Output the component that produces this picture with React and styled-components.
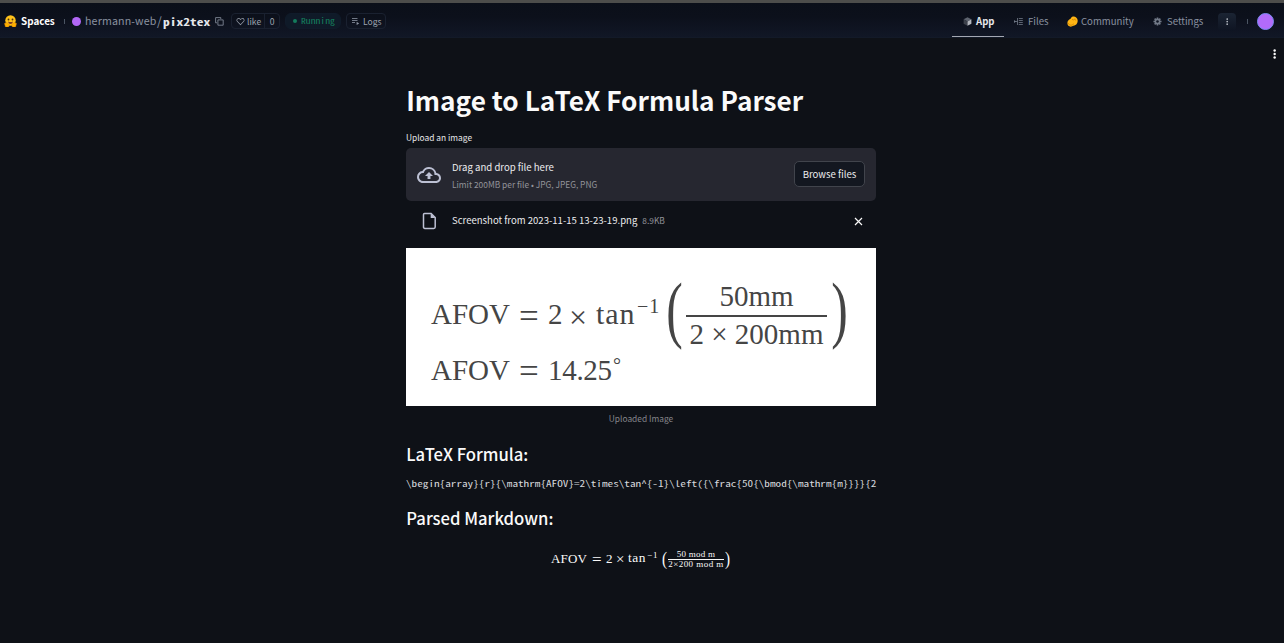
import React from 'react';
import styled, { createGlobalStyle, css } from 'styled-components';

const sans = css`font-family: "Noto Sans CJK JP", "Noto Sans", sans-serif;`;
const mono = css`font-family: "Noto Sans Mono CJK JP", "DejaVu Sans Mono", monospace;`;
const serif = css`font-family: "Liberation Serif", serif;`;

const Global = createGlobalStyle`
  * { box-sizing: border-box; }
  body { margin: 0; background: #0e1117; }
`;
const Page = styled.div`
  ${sans}
  height: 643px;
  overflow: hidden;
  background: #0e1117;
  color: #fafafa;
  white-space: nowrap;
  svg { display: block; flex: none; }
`;
const Header = styled.header`
  height: 38px;
  display: flex;
  justify-content: space-between;
  border-top: 3px solid #4d4d4b;
  border-bottom: 1px solid #131a28;
  padding: 0 10px 0 4px;
  background: linear-gradient(#0b0f19, #0c101b 40%, #111726);
`;
const Group = styled.div`
  display: flex;
  align-items: center;
  height: ${p => p.$h || 36}px;
`;
const Label = styled.span`
  display: block;
  width: ${p => p.$w}px;
  margin-left: ${p => p.$ml || 0}px;
  padding-top: ${p => p.$pt || 0}px;
  font-size: ${p => p.$size || 9.6}px;
  font-weight: ${p => (p.$bold ? 700 : 400)};
  letter-spacing: ${p => p.$ls || 0}px;
  color: ${p => p.$c || '#8b93a1'};
  line-height: 16px;
`;
const MonoLabel = styled(Label)`
  ${mono}
  transform: scaleX(1.273);
  transform-origin: 0 50%;
`;
const Divider = styled.i`
  width: 1px;
  height: 5px;
  margin: ${p => p.$t || 0}px ${p => p.$r}px 0 ${p => p.$l}px;
  background: #4b5563;
`;
const Dot = styled.i`
  flex: none;
  width: ${p => p.$d}px;
  height: ${p => p.$d}px;
  border-radius: 50%;
  background: ${p => p.$bg};
`;
const Avatar = styled(Dot)`
  margin-top: 2px;
  border: 1px solid #788cf0;
`;
const Pill = styled.div`
  display: flex;
  align-items: center;
  width: ${p => p.$w}px;
  height: 16px;
  margin-left: ${p => p.$ml}px;
  padding-left: ${p => p.$pl}px;
  border: 1px solid ${p => p.$bd || '#1a2130'};
  border-radius: ${p => p.$r || 4}px;
  background: ${p => p.$bg || 'transparent'};
`;
const Count = styled.span`
  width: 15px;
  height: 14px;
  margin-left: 1px;
  border-left: 1px solid #1a2130;
  font-size: 8.6px;
  line-height: 14px;
  text-align: center;
  color: #9ca3af;
`;
const Tab = styled.div`
  display: flex;
  align-items: center;
  width: ${p => p.$w}px;
  height: 34px;
  padding: 3px 0 0 ${p => p.$pl}px;
  border-bottom: 1px solid ${p => (p.$active ? '#a3a8b3' : 'transparent')};
`;
const More = styled.div`
  display: flex;
  align-items: center;
  justify-content: center;
  width: 18px;
  height: 18px;
  margin-top: 3px;
  border-radius: 4px;
  background: linear-gradient(#1b2433, #0e1422);
`;
const MenuRow = styled.div`
  display: flex;
  justify-content: flex-end;
  height: 41px;
  padding: 11px 8px 0 0;
`;
const Column = styled.main`
  width: 470px;
  margin-left: 406px;
`;
const Title = styled.h1`
  margin: 0;
  padding-left: 0.2px;
  height: 42px;
  font-size: 26.2px;
  line-height: 42px;
  font-weight: 700;
`;
const FieldLabel = styled.div`
  margin-top: 8px;
  height: 19px;
  font-size: 8.4px;
  line-height: 16px;
  color: #e8e8ea;
`;
const DropZone = styled.section`
  display: flex;
  align-items: center;
  height: 53px;
  padding: 0 11px;
  border-radius: 5px;
  background: #262730;
`;
const DropText = styled.div`
  flex: 1;
  margin-left: 11px;
  padding-top: 2px;
`;
const Main = styled.div`
  font-size: 9.6px;
  line-height: 17px;
  color: #ececee;
`;
const Hint = styled.div`
  font-size: 8.4px;
  line-height: 17px;
  color: #93949a;
`;
const Browse = styled.button`
  ${sans}
  width: 71px;
  height: 26px;
  margin-bottom: 1px;
  padding: 0;
  border: 1px solid #41444c;
  border-radius: 5px;
  background: #131720;
  color: #ececee;
  font-size: 9.6px;
  line-height: 22px;
`;
const FileRow = styled.div`
  display: flex;
  align-items: center;
  height: 40px;
  margin-bottom: 7px;
  padding: 0 13px 0 16px;
`;
const FileName = styled.div`
  margin-left: 15px;
  padding-bottom: 2px;
  font-size: 9.57px;
  color: #ececee;
`;
const FileSize = styled.div`
  flex: 1;
  margin-left: 5px;
  padding-bottom: 2px;
  font-size: 8.4px;
  color: #93949a;
`;
const Picture = styled.figure`
  margin: 0;
  height: 158px;
  padding: 34px 0 0 25px;
  background: #fff;
  color: #454545;
  ${serif}
`;
const Line = styled.div`
  display: flex;
  align-items: center;
  height: ${p => p.$h}px;
`;
const Tok = styled.span`
  display: block;
  flex: none;
  width: ${p => p.$w}px;
  margin-left: ${p => p.$ml || 0}px;
  padding-bottom: ${p => p.$up || 0}px;
  font-size: ${p => p.$size || 29}px;
  line-height: 1;
  letter-spacing: ${p => p.$ls || 0}px;
`;
const Delim = styled.span`
  display: flex;
  align-items: center;
  justify-content: center;
  flex: none;
  width: ${p => p.$w}px;
  height: ${p => p.$h}px;
  margin-left: ${p => p.$ml || 0}px;
  padding-bottom: ${p => p.$up || 0}px;
  font-size: ${p => p.$size}px;
  line-height: 1;
  transform: scaleX(${p => p.$sx});
`;
const Frac = styled.div`
  flex: none;
  width: ${p => p.$w}px;
  margin-left: ${p => p.$ml}px;
`;
const Part = styled.div`
  display: flex;
  justify-content: center;
  align-items: center;
  height: ${p => p.$h}px;
  padding-bottom: ${p => p.$up || 0}px;
  font-size: ${p => p.$size}px;
  line-height: 1;
  letter-spacing: ${p => p.$ls || 0}px;
  border-bottom: ${p => (p.$rule ? `${p.$rule}px solid` : 0)};
`;
const Caption = styled.div`
  height: 27px;
  font-size: 8.4px;
  line-height: 25px;
  text-align: center;
  color: #85868b;
`;
const Sub = styled.h3`
  margin: 0;
  padding-left: 0.3px;
  height: 42px;
  font-size: 16.65px;
  line-height: 42px;
  font-weight: 500;
`;
const Code = styled.div`
  ${mono}
  width: 370px;
  height: 22px;
  font-size: 8.8px;
  line-height: 17px;
  color: #d4d6da;
  transform: scaleX(1.273);
  transform-origin: 0 50%;
`;
const Parsed = styled.div`
  ${serif}
  display: flex;
  align-items: center;
  height: 30px;
  margin-top: 5px;
  padding-left: 145px;
`;

const Hug = () => (
  <svg width="13" height="12" viewBox="0 0 26 24">
    <circle cx="13" cy="11" r="10.5" fill="#ffc21a" />
    <circle cx="9" cy="9" r="1.8" fill="#4b3210" /><circle cx="17" cy="9" r="1.8" fill="#4b3210" />
    <path d="M8 13q5 2 10 0-1 5-5 5t-5-5" fill="#7d3b23" />
    <path d="M1 17l5-2 5 5-2 4H3zM25 17l-5-2-5 5 2 4h6z" fill="#ffb000" stroke="#d98200" />
  </svg>
);
const Hand = () => (
  <svg width="11" height="11" viewBox="0 0 24 24">
    <path d="M2 11C4 8 8 7 9 4c2-4 8-4 11-1 4 3 4 9 2 13-2 4-5 5-8 5l-4 2c-5 1-9-2-9-6 0-3 0-4 1-6z" fill="#ffb514" />
    <path d="M2 15q3 7 9 5l4-3M11 7l3 2 3-3 2 4" fill="none" stroke="#c47a00" strokeWidth="1.5" />
  </svg>
);
const Copy = () => (
  <svg width="9" height="9" viewBox="0 0 9 9" fill="none" stroke="#8b93a1">
    <path d="M2 5.8H.6V.6h5.2V2M2.9 2.9h5.3v5.3H2.9z" strokeWidth=".8" />
  </svg>
);
const Heart = () => (
  <svg width="9" height="9" viewBox="0 0 32 32" fill="#9ca3af">
    <path d="M22.5 4c-2 0-4 .8-5.3 2.2L16 7.5l-1.1-1.3A7.4 7.4 0 0 0 4.2 16.8L16 29l11.8-12.2A7.4 7.4 0 0 0 22.5 4zm3.7 11.2L16 25.5 5.8 15.2A5 5 0 0 1 13 8l3 3 3-3a5 5 0 0 1 7.2 7.2z" />
  </svg>
);
const LogsIcon = () => (
  <svg width="9" height="9" viewBox="0 0 9 9" fill="none" stroke="#8b93a1">
    <path d="M1 1.5h5.5M1 3.5h5.5M1 5.5h3" strokeWidth=".8" /><path d="M5.6 4.8l2.6 1.6-2.6 1.6z" fill="#8b93a1" stroke="none" />
  </svg>
);
const Cube = () => (
  <svg width="9" height="9" viewBox="0 0 9 9">
    <path d="M4.5.3l3.9 2-3.9 2.2L.6 2.3z" fill="#5d636e" /><path d="M.6 2.3l3.9 2.2v4.2L.6 6.8z" fill="#3c414b" /><path d="M8.4 2.3L4.5 4.5v4.2l3.9-1.9z" fill="#b4b8bf" />
  </svg>
);
const FilesIcon = () => (
  <svg width="10" height="9" viewBox="0 0 10 9" fill="none" stroke="#717987">
    <path d="M3.5 1v7M.5 4.5h3M4.8 1.5h4M4.8 3.5h4M4.8 5.5h4M4.8 7.5h4" strokeWidth=".8" /><path d="M0 3l2 1.5L0 6z" fill="#717987" stroke="none" />
  </svg>
);
const Gear = () => (
  <svg width="9" height="9" viewBox="0 0 20 20">
    <g stroke="#717987" strokeWidth="3.6"><path d="M10 1v18M1 10h18M3.6 3.6l12.8 12.8M16.4 3.6L3.6 16.4" /></g>
    <circle cx="10" cy="10" r="6.5" fill="#717987" /><circle cx="10" cy="10" r="2.8" fill="#0d1322" />
  </svg>
);
const Kebab = ({ s = 1, c = '#fafafa' }) => (
  <svg width={3 * s} height={9 * s} viewBox="0 0 3 9" fill={c}>
    <circle cx="1.5" cy="1.3" r="1.1" /><circle cx="1.5" cy="4.5" r="1.1" /><circle cx="1.5" cy="7.7" r="1.1" />
  </svg>
);
const Cloud = () => (
  <svg width="24" height="24" viewBox="0 0 24 24" fill="#bdc1d4">
    <path d="M19.35 10.04A7.49 7.49 0 0 0 12 4C9.11 4 6.6 5.64 5.35 8.04A5.994 5.994 0 0 0 0 14c0 3.31 2.69 6 6 6h13c2.76 0 5-2.24 5-5 0-2.64-2.05-4.78-4.65-4.96zM19 18H6c-2.21 0-4-1.79-4-4s1.79-4 4-4h.71a5.5 5.5 0 0 1 10.79 1.5v.5H19c1.66 0 3 1.34 3 3s-1.34 3-3 3zM8 13h2.55v3h2.9v-3H16l-4-4z" />
  </svg>
);
const Doc = () => (
  <svg width="15" height="18" viewBox="0 0 15 18">
    <path d="M2.5 1.5h6.6l4.1 4.1V15q0 1.4-1.4 1.4H2.9q-1.4 0-1.4-1.4V2.5q0-1 1-1z" fill="none" stroke="#bdc1d4" strokeWidth="1.5" /><path d="M8.7 1.5V6h4.6z" fill="#bdc1d4" />
  </svg>
);
const Close = () => (
  <svg width="9" height="9" viewBox="0 0 9 9" stroke="#fafafa" strokeWidth="1.2"><path d="M1 1l7 7M8 1L1 8" /></svg>
);

export default function App() {
  return (
    <Page>
      <Global />
      <Header>
        <Group>
          <Hug />
          <Label $ml={4} $w={39} $bold $size={9.9} $c="#fff">Spaces</Label>
          <Divider $l={4} $r={7} />
          <Dot $d={9} $bg="#b267f5" />
          <Label $ml={4} $w={72} $size={10.65} $ls={0.14}>hermann-web</Label>
          <Label $w={6} $size={12}>/</Label>
          <MonoLabel $w={48} $pt={1} $bold $size={10.6} $c="#e5e7eb">pix2tex</MonoLabel>
          <Label $ml={4} $w={9}><Copy /></Label>
          <Pill $ml={7} $w={49} $pl={4}>
            <Heart />
            <Label $ml={2} $w={17} $size={8.6} $c="#9ca3af">like</Label>
            <Count>0</Count>
          </Pill>
          <Pill $ml={5} $w={56} $pl={7} $r={6} $bg="#0f1a28" $bd="#101b2a">
            <Dot $d={4} $bg="#137a5b" />
            <MonoLabel $ml={4} $w={36} $size={7.6} $c="#15805f">Running</MonoLabel>
          </Pill>
          <Pill $ml={5} $w={40} $pl={4}>
            <LogsIcon />
            <Label $ml={3} $w={20} $size={8.6} $c="#9ca3af">Logs</Label>
          </Pill>
        </Group>
        <Group $h={34}>
          <Tab $w={52} $pl={11} $active><Cube /><Label $ml={4} $w={20} $bold $c="#e5e7eb">App</Label></Tab>
          <Tab $w={52} $pl={10}><FilesIcon /><Label $ml={4} $w={22}>Files</Label></Tab>
          <Tab $w={87} $pl={11}><Hand /><Label $ml={3} $w={54}>Community</Label></Tab>
          <Tab $w={75} $pl={10}><Gear /><Label $ml={5} $w={38}>Settings</Label></Tab>
          <More><Kebab s={0.8} c="#b6bac2" /></More>
          <Divider $l={11} $r={9} $t={3} />
          <Avatar $d={17} $bg="#b26bfa" />
        </Group>
      </Header>
      <MenuRow><Kebab s={1.1} /></MenuRow>
      <Column>
        <Title>Image to LaTeX Formula Parser</Title>
        <FieldLabel>Upload an image</FieldLabel>
        <DropZone>
          <Cloud />
          <DropText>
            <Main>Drag and drop file here</Main>
            <Hint>Limit 200MB per file • JPG, JPEG, PNG</Hint>
          </DropText>
          <Browse>Browse files</Browse>
        </DropZone>
        <FileRow>
          <Doc />
          <FileName>Screenshot from 2023-11-15 13-23-19.png</FileName>
          <FileSize>8.9KB</FileSize>
          <Close />
        </FileRow>
        <Picture>
          <Line $h={70}>
            <Tok $w={79} $up={5}>AFOV</Tok>
            <Tok $ml={9} $w={20} $size={35} $up={1}>=</Tok>
            <Tok $ml={9} $w={14} $up={5}>2</Tok>
            <Tok $ml={7} $w={19} $size={32} $up={1}>×</Tok>
            <Tok $ml={8} $w={41} $size={30} $ls={0.9} $up={6}>tan</Tok>
            <Tok $w={24} $size={20} $ls={1} $up={22}>−1</Tok>
            <Delim $ml={6} $w={15} $h={70} $size={73} $sx={0.68} $up={15}>(</Delim>
            <Frac $ml={4} $w={141}>
              <Part $h={35} $size={29} $rule={2} $up={5}>50mm</Part>
              <Part $h={35} $size={29}>2 × 200mm</Part>
            </Frac>
            <Delim $ml={5} $w={15} $h={70} $size={73} $sx={0.68} $up={15}>)</Delim>
          </Line>
          <Line $h={38}>
            <Tok $w={79} $up={1}>AFOV</Tok>
            <Tok $ml={9} $w={20} $size={35}>=</Tok>
            <Tok $ml={9} $w={64} $up={1} $ls={-0.3}>14.25</Tok>
            <Tok $ml={1} $w={10} $size={20} $up={12}>°</Tok>
          </Line>
        </Picture>
        <Caption>Uploaded Image</Caption>
        <Sub>LaTeX Formula:</Sub>
        <Code>{'\\begin{array}{r}{\\mathrm{AFOV}=2\\times\\tan^{-1}\\left({\\frac{50{\\bmod{\\mathrm{m}}}}{2'}</Code>
        <Sub>Parsed Markdown:</Sub>
        <Parsed>
          <Tok $w={37} $size={13} $ls={0.2} $up={2}>AFOV</Tok>
          <Tok $ml={4} $w={10} $size={17}>=</Tok>
          <Tok $ml={4} $w={7} $size={13} $up={2}>2</Tok>
          <Tok $ml={3} $w={8} $size={15}>×</Tok>
          <Tok $ml={4} $w={19} $size={13.4} $ls={0.5} $up={2}>tan</Tok>
          <Tok $w={12} $size={9} $ls={0.8} $up={8}>−1</Tok>
          <Delim $ml={3} $w={5} $h={20} $size={19} $sx={0.8} $up={1}>(</Delim>
          <Frac $ml={1} $w={56}>
            <Part $h={11} $size={9} $rule={1} $ls={0.25}>50 mod m</Part>
            <Part $h={9} $size={9} $ls={0.45}>2×200 mod m</Part>
          </Frac>
          <Delim $ml={1} $w={5} $h={20} $size={19} $sx={0.8} $up={1}>)</Delim>
        </Parsed>
      </Column>
    </Page>
  );
}
